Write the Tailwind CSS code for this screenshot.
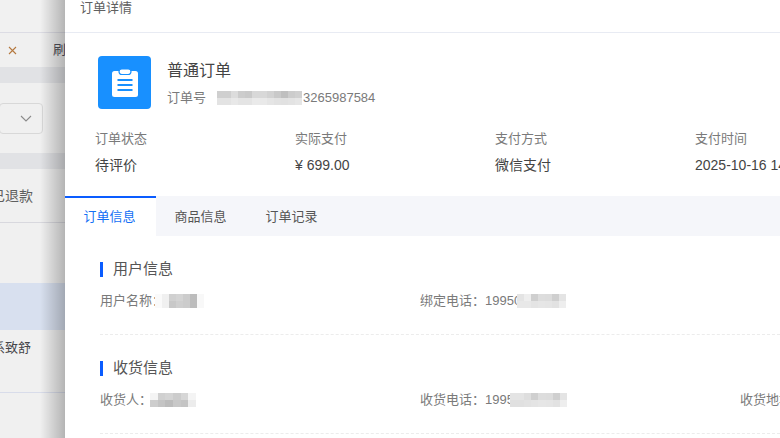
<!DOCTYPE html>
<html>
<head>
    <title>订单详情</title>
    <script src="https://cdn.jsdelivr.net/npm/@tailwindcss/browser@4"></script>
</head>
<body class="bg-[#f0f0f0]">
    <div class="relative w-[780px] h-[438px] overflow-hidden font-['Liberation_Sans','Noto_Sans_CJK_SC',sans-serif]">
        <!-- 背景页面 -->
        <div class="w-[65px] h-full flex flex-col text-[13px] text-[#5f5f5f] overflow-hidden whitespace-nowrap">
            <div class="h-[33px] shrink-0 bg-[#f1f1f1] border-b border-[#dcdce4]"></div>
            <div class="h-[34px] shrink-0 flex items-center pl-[7px] gap-[35px]">
                <svg width="11" height="11" viewBox="0 0 11 11" class="shrink-0" fill="none" stroke="#b5793f" stroke-width="1.1"><path d="M2 2l7 7M9 2l-7 7"/></svg>
                <span class="text-[#50505a]">刷新</span>
            </div>
            <div class="h-[16px] shrink-0 bg-[#e1e2e5]"></div>
            <div class="h-[70px] shrink-0 pt-[20px]">
                <div class="w-[44px] h-[31px] -ml-px border border-[#d8d8d8] rounded-[4px] flex items-center justify-end pr-[10px]">
                    <svg width="12" height="7" viewBox="0 0 12 7" fill="none" stroke="#8b8b8b" stroke-width="1.1"><path d="M1 1l5 5 5-5"/></svg>
                </div>
            </div>
            <div class="h-[16px] shrink-0 bg-[#e1e2e5]"></div>
            <div class="h-[54px] shrink-0 border-b border-[#d8d8de] flex items-center justify-end pr-[32px] text-[14px] pt-[2px]"><span>已退款</span></div>
            <div class="h-[60px] shrink-0"></div>
            <div class="h-[47px] shrink-0 bg-[#d8e0ef]"></div>
            <div class="h-[63px] shrink-0 border-b border-[#d8dcea] flex justify-end pr-[34px] pt-[8px]"><span class="text-[#45454a]">柔系致舒</span></div>
        </div>
        <div class="absolute top-0 bottom-0 left-[40px] w-[25px] bg-gradient-to-r from-black/0 to-black/25"></div>

        <!-- 订单详情抽屉 -->
        <div class="absolute top-0 left-[65px] w-[715px] h-full bg-white text-[13px] text-[#7a7a7a] whitespace-nowrap overflow-hidden">
            <div class="h-[33px] border-b border-[#e8ebf3] pl-[15px] text-[13px] text-[#606060] leading-[16px]">订单详情</div>

            <div class="flex items-center pl-[33px] pt-[23px] gap-[16px]">
                <div class="w-[53px] h-[53px] rounded-[4px] bg-[#1890ff] flex items-center justify-center">
                    <svg width="26" height="28" viewBox="0 0 26 28" fill="none">
                        <rect x="0" y="2" width="26" height="26" rx="2.5" fill="#fff"/>
                        <rect x="7" y="0" width="12" height="5.5" rx="2.7" fill="#fff" stroke="#1890ff" stroke-width="1.2"/>
                        <path d="M5.5 11h15M5.5 16h15M5.5 21h15" stroke="#1890ff" stroke-width="2"/>
                    </svg>
                </div>
                <div class="flex flex-col pt-[2px]">
                    <div class="text-[16px] leading-[22px] text-[#444]">普通订单</div>
                    <div class="flex items-center h-[19px] mt-[7px]">
                        <span>订单号</span>
                        <div class="w-[85px] h-[14px] ml-[11px] grid grid-cols-12 grid-rows-2">
                            <i class="bg-[#cfcfcf]"></i><i class="bg-[#cfcfcf]"></i><i class="bg-[#dcdcdc]"></i><i class="bg-[#cccccc]"></i><i class="bg-[#c9c9c9]"></i><i class="bg-[#d8d8d8]"></i><i class="bg-[#d8d8d8]"></i><i class="bg-[#d2d2d2]"></i><i class="bg-[#c9c9c9]"></i><i class="bg-[#bfbfbf]"></i><i class="bg-[#cccccc]"></i><i class="bg-[#d0d0d0]"></i>
                            <i class="bg-[#e3e3e3]"></i><i class="bg-[#e3e3e3]"></i><i class="bg-[#e8e8e8]"></i><i class="bg-[#e4e4e4]"></i><i class="bg-[#e4e4e4]"></i><i class="bg-[#eaeaea]"></i><i class="bg-[#e9e9e9]"></i><i class="bg-[#e5e5e5]"></i><i class="bg-[#e2e2e2]"></i><i class="bg-[#e1e1e1]"></i><i class="bg-[#e3e3e3]"></i><i class="bg-[#e6e6e6]"></i>
                        </div>
                        <span class="ml-[1px]">3265987584</span>
                    </div>
                </div>
            </div>

            <div class="grid grid-cols-[200px_200px_200px_200px] pl-[30px] mt-[20px]">
                <div>
                    <div class="leading-[19px]">订单状态</div>
                    <div class="mt-[8px] leading-[19px] text-[14px] text-[#444]">待评价</div>
                </div>
                <div>
                    <div class="leading-[19px]">实际支付</div>
                    <div class="mt-[8px] leading-[19px] text-[14px] text-[#444]">¥ 699.00</div>
                </div>
                <div>
                    <div class="leading-[19px]">支付方式</div>
                    <div class="mt-[8px] leading-[19px] text-[14px] text-[#444]">微信支付</div>
                </div>
                <div>
                    <div class="leading-[19px]">支付时间</div>
                    <div class="mt-[8px] leading-[19px] text-[14px] text-[#444]">2025-10-16 14:30:25</div>
                </div>
            </div>

            <div class="flex h-[40px] mt-[21px] bg-[#f5f6fa] text-[#555] leading-[38px]">
                <div class="w-[91px] pr-[2px] text-center bg-white border-t-2 border-[#0a5cff] text-[#1470f5]">订单信息</div>
                <div class="w-[91px] pr-[2px] text-center pt-[2px]">商品信息</div>
                <div class="w-[91px] pr-[2px] text-center pt-[2px]">订单记录</div>
            </div>

            <div class="pl-[35px]">
                <div class="flex items-center mt-[26px] h-[15px] border-l-[3px] border-[#0a5cff] pl-[10px] text-[15px] text-[#555]">用户信息</div>
                <div class="grid grid-cols-[320px_320px_320px] mt-[14px] h-[19px] leading-[19px]">
                    <div class="flex items-center">
                        <span>用户名称：</span>
                        <div class="w-[49px] h-[14px] -ml-[10px] grid grid-cols-7 grid-rows-2">
                            <i class="bg-[#fafafa]"></i><i class="bg-[#f0f0f0]"></i><i class="bg-[#d0d0d0]"></i><i class="bg-[#d4d4d4]"></i><i class="bg-[#cccccc]"></i><i class="bg-[#bcbcbc]"></i><i class="bg-[#f8f8f8]"></i>
                            <i class="bg-[#fafafa]"></i><i class="bg-[#f0f0f0]"></i><i class="bg-[#c8c8c8]"></i><i class="bg-[#cfcfcf]"></i><i class="bg-[#cccccc]"></i><i class="bg-[#bcbcbc]"></i><i class="bg-[#f8f8f8]"></i>
                        </div>
                    </div>
                    <div class="flex items-center">
                        <span>绑定电话：19950</span>
                        <div class="w-[49px] h-[14px] -ml-[4px] grid grid-cols-7 grid-rows-2">
                            <i class="bg-[#e4e4e4]"></i><i class="bg-[#eeeeee]"></i><i class="bg-[#cfcfcf]"></i><i class="bg-[#dddddd]"></i><i class="bg-[#dcdcdc]"></i><i class="bg-[#cfcfcf]"></i><i class="bg-[#e4e4e4]"></i>
                            <i class="bg-[#e8e8e8]"></i><i class="bg-[#e8e8e8]"></i><i class="bg-[#e4e4e4]"></i><i class="bg-[#e6e6e6]"></i><i class="bg-[#e5e5e5]"></i><i class="bg-[#e2e2e2]"></i><i class="bg-[#eeeeee]"></i>
                        </div>
                    </div>
                </div>
                <div class="mt-[24px] border-t border-dashed border-[#ececec]"></div>

                <div class="flex items-center mt-[26px] h-[15px] border-l-[3px] border-[#0a5cff] pl-[10px] text-[15px] text-[#555]">收货信息</div>
                <div class="grid grid-cols-[320px_320px_320px] mt-[14px] h-[19px] leading-[19px]">
                    <div class="flex items-center">
                        <span>收货人：</span>
                        <div class="w-[46px] h-[14px] -ml-[2px] grid grid-cols-6 grid-rows-2">
                            <i class="bg-[#f4f4f4]"></i><i class="bg-[#d0d0d0]"></i><i class="bg-[#d4d4d4]"></i><i class="bg-[#cccccc]"></i><i class="bg-[#d6d6d6]"></i><i class="bg-[#f4f4f4]"></i>
                            <i class="bg-[#cdcdcd]"></i><i class="bg-[#c4c4c4]"></i><i class="bg-[#bcbcbc]"></i><i class="bg-[#c8c8c8]"></i><i class="bg-[#c4c4c4]"></i><i class="bg-[#ececec]"></i>
                        </div>
                    </div>
                    <div class="flex items-center">
                        <span>收货电话：1995</span>
                        <div class="w-[57px] h-[14px] -ml-[4px] grid grid-cols-8 grid-rows-2">
                            <i class="bg-[#e4e4e4]"></i><i class="bg-[#e4e4e4]"></i><i class="bg-[#dedede]"></i><i class="bg-[#cfcfcf]"></i><i class="bg-[#dddddd]"></i><i class="bg-[#dcdcdc]"></i><i class="bg-[#cfcfcf]"></i><i class="bg-[#e4e4e4]"></i>
                            <i class="bg-[#e0e0e0]"></i><i class="bg-[#e0e0e0]"></i><i class="bg-[#e2e2e2]"></i><i class="bg-[#e4e4e4]"></i><i class="bg-[#e6e6e6]"></i><i class="bg-[#e5e5e5]"></i><i class="bg-[#e2e2e2]"></i><i class="bg-[#eeeeee]"></i>
                        </div>
                    </div>
                    <div>收货地址：</div>
                </div>
                <div class="mt-[24px] border-t border-dashed border-[#ececec]"></div>
            </div>
        </div>
    </div>
</body>
</html>
